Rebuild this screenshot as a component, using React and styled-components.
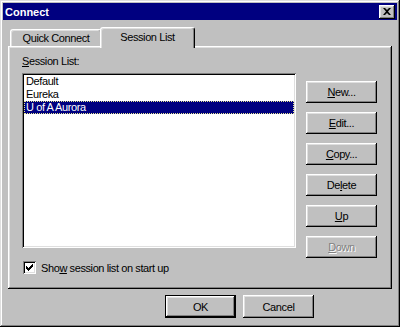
import React from 'react';
import styled, { createGlobalStyle, css } from 'styled-components';

const Global = createGlobalStyle`
  html, body { margin: 0; padding: 0; background: #c0c0c0; }
  body { font-family: "Liberation Sans", Arial, sans-serif; font-size: 11px; letter-spacing: -0.4px; color: #000; }
  * { box-sizing: border-box; }
`;

const raised = css`
  box-shadow: inset -1px -1px #000, inset 1px 1px #fff, inset -2px -2px #808080, inset 2px 2px #dfdfdf;
`;

const sunken = css`
  box-shadow: inset 1px 1px #808080, inset -1px -1px #fff, inset 2px 2px #000, inset -2px -2px #dfdfdf;
`;

const Window = styled.div`
  width: 400px;
  height: 327px;
  background: #c0c0c0;
  padding: 3px;
  display: flex;
  flex-direction: column;
  box-shadow: inset -1px -1px #000, inset 1px 1px #dfdfdf, inset -2px -2px #808080, inset 2px 2px #fff;
`;

const TitleBar = styled.div`
  height: 17px;
  background: #000080;
  color: #fff;
  font-weight: bold;
  font-size: 11px;
  letter-spacing: 0;
  display: flex;
  align-items: center;
  justify-content: space-between;
  padding: 0 2px 0 2px;
`;

const CloseButton = styled.div`
  width: 16px;
  height: 14px;
  background: #c0c0c0;
  display: flex;
  align-items: center;
  justify-content: center;
  ${raised};
`;

const Body = styled.div`
  display: flex;
  flex-direction: column;
  padding: 7px 5px 0 5px;
`;

const TabRow = styled.div`
  display: flex;
  align-items: flex-end;
  height: 19px;
  padding-left: 2px;
`;

const Tab = styled.div`
  position: relative;
  width: ${p => p.$w}px;
  height: ${p => (p.$active ? 21 : 17)}px;
  margin-bottom: ${p => (p.$active ? -2 : 0)}px;
  margin-left: ${p => (p.$active ? -2 : 0)}px;
  padding-bottom: ${p => (p.$active ? 3 : 1)}px;
  z-index: ${p => (p.$active ? 1 : 0)};
  background: #c0c0c0;
  border-style: solid;
  border-width: 1px 1px 0 1px;
  border-color: #fff #000 transparent #fff;
  border-radius: 3px 3px 0 0;
  box-shadow: inset -1px 0 #808080, inset 1px 1px #dfdfdf;
  display: flex;
  align-items: center;
  justify-content: center;
`;

const Panel = styled.div`
  height: 243px;
  background: #c0c0c0;
  display: flex;
  gap: 10px;
  padding: 9px 15px 0 14px;
  ${raised};
`;

const LeftCol = styled.div`
  display: flex;
  flex-direction: column;
  width: 274px;
`;

const Label = styled.div`
  height: 13px;
  line-height: 13px;
  margin-bottom: 5px;
`;

const ListBox = styled.div`
  height: 175px;
  background: #fff;
  padding: 2px;
  ${sunken};
`;

const Item = styled.div`
  height: 13px;
  line-height: 13px;
  padding-left: 2px;
  white-space: nowrap;
  background: ${p => (p.$selected ? '#000080' : 'transparent')};
  color: ${p => (p.$selected ? '#fff' : '#000')};
  outline: ${p => (p.$selected ? '1px dotted #e8e890' : 'none')};
  outline-offset: -1px;
`;

const CheckRow = styled.label`
  display: flex;
  align-items: center;
  gap: 5px;
  margin-top: 13px;
  margin-left: 1px;
  height: 13px;
`;

const CheckBox = styled.span`
  width: 13px;
  height: 13px;
  background: #fff;
  display: flex;
  align-items: center;
  justify-content: center;
  ${sunken};
`;

const RightCol = styled.div`
  display: flex;
  flex-direction: column;
  gap: 9px;
  padding-top: 26px;
`;

const Button = styled.div`
  width: 71px;
  height: ${p => p.$h || 22}px;
  background: #c0c0c0;
  display: flex;
  align-items: center;
  justify-content: center;
  color: ${p => (p.$disabled ? '#808080' : '#000')};
  text-shadow: ${p => (p.$disabled ? '1px 1px #fff' : 'none')};
  box-shadow: ${p =>
    p.$default
      ? 'inset 0 0 0 1px #000, inset -2px -2px #000, inset 2px 2px #fff, inset -3px -3px #808080, inset 3px 3px #dfdfdf'
      : 'inset -1px -1px #000, inset 1px 1px #fff, inset -2px -2px #808080, inset 2px 2px #dfdfdf'};
`;

const Footer = styled.div`
  display: flex;
  justify-content: flex-end;
  gap: 7px;
  padding: 6px 78px 0 0;
`;

const sessions = ['Default', 'Eureka', 'U of A Aurora'];

export default function App() {
  return (
    <>
      <Global />
      <Window>
        <TitleBar>
          <span>Connect</span>
          <CloseButton>
            <svg width="8" height="7" viewBox="0 0 8 7">
              <path d="M0 0h2l2 2 2-2h2L5 3.5 8 7H6L4 5 2 7H0l3-3.5z" fill="#000" />
            </svg>
          </CloseButton>
        </TitleBar>
        <Body>
          <TabRow>
            <Tab $w={92}>Quick Connect</Tab>
            <Tab $w={95} $active>Session List</Tab>
          </TabRow>
          <Panel>
            <LeftCol>
              <Label><u>S</u>ession List:</Label>
              <ListBox>
                {sessions.map((s, i) => (
                  <Item key={s} $selected={i === 2}>{s}</Item>
                ))}
              </ListBox>
              <CheckRow>
                <CheckBox>
                  <svg width="7" height="7" viewBox="0 0 7 7" shapeRendering="crispEdges">
                    <path d="M6 0h1v3h-1v1h-1v1h-1v1h-1v1h-1v-1h-1v-1h-1v-3h1v1h1v1h1v-1h1v-1h1v-1h1z" fill="#000" />
                  </svg>
                </CheckBox>
                <span>Sho<u>w</u> session list on start up</span>
              </CheckRow>
            </LeftCol>
            <RightCol>
              <Button><span><u>N</u>ew...</span></Button>
              <Button><span><u>E</u>dit...</span></Button>
              <Button><span><u>C</u>opy...</span></Button>
              <Button><span>De<u>l</u>ete</span></Button>
              <Button><span><u>U</u>p</span></Button>
              <Button $disabled><span><u>D</u>own</span></Button>
            </RightCol>
          </Panel>
          <Footer>
            <Button $h={23} $default>OK</Button>
            <Button $h={23}>Cancel</Button>
          </Footer>
        </Body>
      </Window>
    </>
  );
}
